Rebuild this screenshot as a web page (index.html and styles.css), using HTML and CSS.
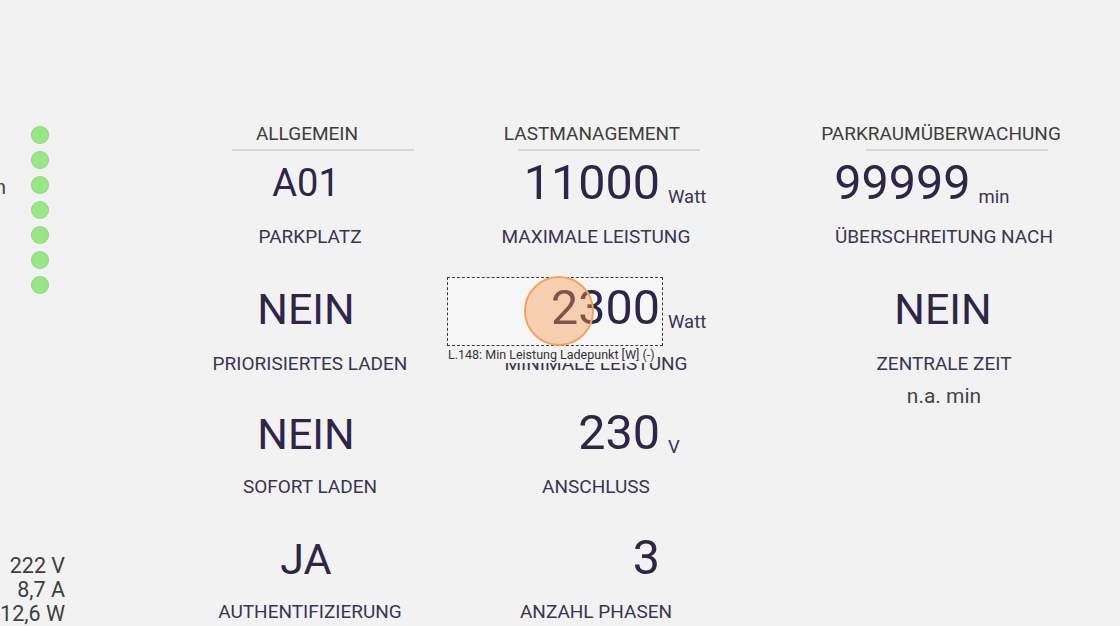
FILE: index.html
```html
<!DOCTYPE html>
<html lang="de">
<head>
<meta charset="utf-8">
<title>Ladepunkt Übersicht</title>
<link rel="stylesheet" href="styles.css">
</head>
<body>
<div class="page">
  <aside class="side">
    <ul class="dots">
      <li class="dot-row"><span class="cut"></span><span class="dot"></span></li>
      <li class="dot-row"><span class="cut"></span><span class="dot"></span></li>
      <li class="dot-row"><span class="cut">n</span><span class="dot"></span></li>
      <li class="dot-row"><span class="cut"></span><span class="dot"></span></li>
      <li class="dot-row"><span class="cut"></span><span class="dot"></span></li>
      <li class="dot-row"><span class="cut"></span><span class="dot"></span></li>
      <li class="dot-row"><span class="cut"></span><span class="dot"></span></li>
    </ul>
    <div class="readings">
      <div>222 V</div>
      <div>8,7 A</div>
      <div>12,6 W</div>
    </div>
  </aside>

  <main class="board">
    <section class="col">
      <div class="head"><span class="head-text">ALLGEMEIN</span><span class="head-rule"></span></div>
      <div class="stat">
        <div class="val val-a"><span class="txt txt-sm">A01</span></div>
        <div class="label">PARKPLATZ</div>
      </div>
      <div class="stat">
        <div class="val val-a"><span class="txt">NEIN</span></div>
        <div class="label label-low">PRIORISIERTES LADEN</div>
      </div>
      <div class="stat">
        <div class="val val-a"><span class="txt">NEIN</span></div>
        <div class="label">SOFORT LADEN</div>
      </div>
      <div class="stat">
        <div class="val val-a"><span class="txt">JA</span></div>
        <div class="label">AUTHENTIFIZIERUNG</div>
      </div>
    </section>

    <section class="col">
      <div class="head"><span class="head-text head-text-b">LASTMANAGEMENT</span><span class="head-rule"></span></div>
      <div class="stat">
        <div class="val"><span class="num num-b">11000</span><span class="unit">Watt</span></div>
        <div class="label">MAXIMALE LEISTUNG</div>
      </div>
      <div class="stat">
        <div class="val"><span class="num num-b">2300</span><span class="unit">Watt</span></div>
        <div class="label label-low">MINIMALE LEISTUNG</div>
      </div>
      <div class="stat">
        <div class="val"><span class="num num-b">230</span><span class="unit">V</span></div>
        <div class="label">ANSCHLUSS</div>
      </div>
      <div class="stat">
        <div class="val"><span class="num num-b">3</span><span class="unit"></span></div>
        <div class="label">ANZAHL PHASEN</div>
      </div>
    </section>

    <section class="col col-c">
      <div class="head"><span class="head-text">PARKRAUMÜBERWACHUNG</span><span class="head-rule"></span></div>
      <div class="stat">
        <div class="val"><span class="num num-c">99999</span><span class="unit">min</span></div>
        <div class="label">ÜBERSCHREITUNG NACH</div>
      </div>
      <div class="stat">
        <div class="val val-c"><span class="txt">NEIN</span></div>
        <div class="label label-low">ZENTRALE ZEIT</div>
        <div class="sub">n.a. min</div>
      </div>
    </section>
  </main>

  <div class="hl-frame"></div>
  <div class="hl-caption">L.148: Min Leistung Ladepunkt [W] (-)</div>
  <div class="hl-touch"></div>
</div>
</body>
</html>
```
FILE: styles.css
```css
html, body {
  margin: 0;
  padding: 0;
  background: #f2f2f2;
}

body {
  font-family: Roboto, "Liberation Sans", Arial, sans-serif;
  color: #3b3453;
}

.page {
  position: relative;
  display: flex;
  width: 1120px;
  height: 626px;
  overflow: hidden;
  box-sizing: border-box;
  padding-top: 122px;
}

/* ---------- left strip ---------- */
.side {
  width: 167px;
  flex: none;
  display: flex;
  flex-direction: column;
}

.dots {
  list-style: none;
  margin: 0;
  padding: 0;
}

.dot-row {
  display: flex;
  align-items: center;
  height: 25px;
}

.cut {
  width: 6px;
  margin-right: 25px;
  display: flex;
  justify-content: flex-end;
  white-space: nowrap;
  font-size: 20px;
  line-height: 24px;
  color: #444;
  position: relative;
  top: 2px;
}

.dot {
  width: 18px;
  height: 18px;
  border-radius: 50%;
  background: #98e686;
  box-shadow: inset 0 0 0 1px rgba(120, 200, 105, 0.35);
}

.readings {
  margin-top: auto;
  width: 65px;
  text-align: right;
  font-size: 21.5px;
  line-height: 24px;
  color: #3e3e3e;
}

/* ---------- board ---------- */
.board {
  position: relative;
  z-index: 1;
  display: flex;
  align-items: flex-start;
}

.col {
  width: 286px;
  flex: none;
}

.col-c {
  margin-left: 62px;
}

.head {
  display: flex;
  flex-direction: column;
  align-items: center;
  margin-bottom: 2px;
}

.head-text {
  font-size: 19px;
  line-height: 24px;
  color: #3d3d3d;
  margin-right: 6px;
  white-space: nowrap;
}

.head-text-b {
  margin-right: 8px;
}

.head-rule {
  display: block;
  width: 182px;
  height: 2px;
  margin-top: 3px;
  margin-left: 25px;
  background: #d7d7d9;
}

.stat {
  height: 125px;
}

.val {
  height: 60px;
  margin-bottom: 12px;
  font-size: 48.5px;
  line-height: 60px;
  text-align: center;
  white-space: nowrap;
  color: #2e2549;
}

.val-a {
  padding-right: 8px;
}

.val-c {
  padding-right: 2px;
}

.txt {
  font-size: 43px;
  line-height: 1;
}

.txt-sm {
  font-size: 38px;
  vertical-align: 3px;
}

.num {
  display: inline-flex;
  justify-content: flex-end;
  white-space: nowrap;
}

.num-b {
  width: 128px;
}

.num-c {
  width: 53px;
}

.unit {
  display: inline-block;
  width: 0;
  text-indent: 8px;
  white-space: nowrap;
  font-size: 18.5px;
  line-height: 1;
  vertical-align: -4px;
  text-align: left;
  color: #3b3453;
}

.label {
  font-size: 19px;
  line-height: 24px;
  text-align: center;
  white-space: nowrap;
  color: #3b3453;
}

.label-low {
  position: relative;
  top: 2px;
}

.sub {
  margin-top: 10px;
  font-size: 21px;
  line-height: 24px;
  text-align: center;
  color: #444;
}

/* ---------- inspector overlay ---------- */
.hl-frame {
  position: absolute;
  z-index: 0;
  left: 447px;
  top: 277px;
  width: 216px;
  height: 69px;
  box-sizing: border-box;
  border: 1px dashed #3a3a3a;
  background: rgba(255, 255, 255, 0.35);
}

.hl-caption {
  position: absolute;
  z-index: 2;
  left: 447px;
  top: 346px;
  padding: 0 2px 0 1px;
  font-size: 12.5px;
  line-height: 17px;
  color: #333;
  background: #f3f3f3;
  white-space: nowrap;
}

.hl-touch {
  position: absolute;
  z-index: 3;
  left: 524px;
  top: 276px;
  width: 70px;
  height: 70px;
  box-sizing: border-box;
  border-radius: 50%;
  border: 2px solid #f3a45f;
  background: rgba(246, 150, 78, 0.42);
}
```
